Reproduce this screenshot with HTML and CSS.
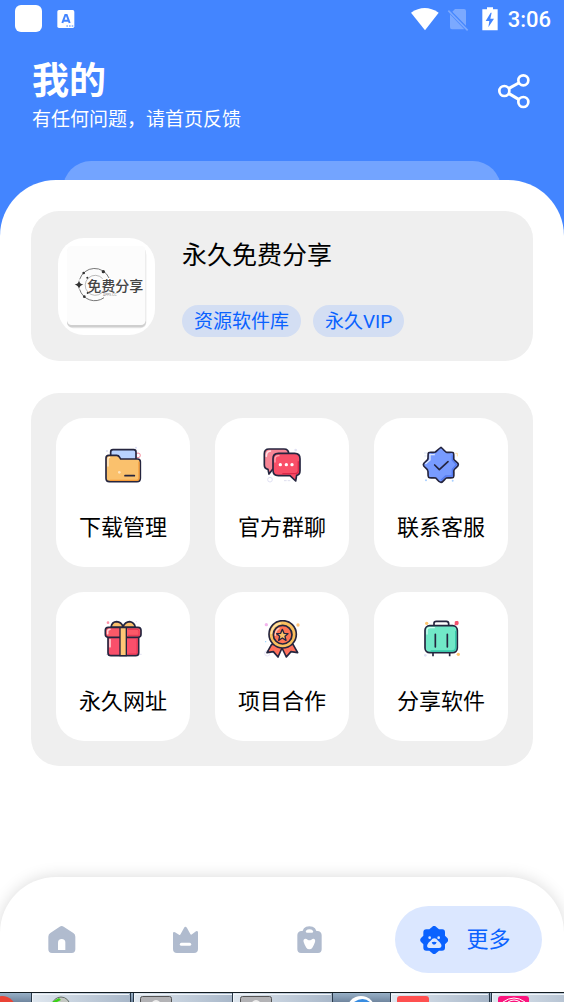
FILE: index.html
```
<!DOCTYPE html>
<html lang="zh-CN">
<head>
<meta charset="utf-8">
<meta name="viewport" content="width=device-width, initial-scale=1">
<title>我的</title>
<link rel="stylesheet" href="styles.css">
</head>

<body>
<header class="header">
  <div class="status">
    <span class="status-app"></span>
    <svg class="status-lang" width="18" height="20" viewBox="0 0 54 60">
      <rect x="1" y="3" width="51" height="54" rx="5" fill="#fff"/>
      <path d="M16 42 L25 18 H29 L38 42 M19 35 H35" fill="none" stroke="#4385ff" stroke-width="6"/>
      <path d="M28 51h5M36 51h5M44 51h5" stroke="#4385ff" stroke-width="3"/>
    </svg>
    <span class="status-space"></span>
    <svg width="28" height="24" viewBox="32 20 84 72">
      <path d="M32 37 Q73 9 115 37 L74 90Z" fill="#fff"/>
    </svg>
    <svg class="status-sim" width="22" height="24" viewBox="141 20 66 72">
      <path d="M165 26H192Q198 26 198 32V76L157 34ZM150 42L193 87H156Q150 87 150 81Z" fill="#7ba9ff"/>
      <path d="M145 31L203 90" stroke="#7ba9ff" stroke-width="5"/>
    </svg>
    <svg class="status-battery" width="16" height="24" viewBox="246 20 48 72">
      <path d="M261 21H279V27H293V90H247V27H261Z" fill="#fff"/>
      <path d="M272 37L257 62H268L265 81L282 55H271L275 37Z" fill="#4385ff"/>
    </svg>
    <span class="status-time">3:06</span>
  </div>
  <div class="heading">
    <div>
      <h1 class="title">我的</h1>
      <p class="subtitle">有任何问题，请首页反馈</p>
    </div>
    <button class="share" type="button" aria-label="分享">
      <svg width="34" height="36" viewBox="291 220 102 108" fill="none" stroke="#fff" stroke-width="8">
        <circle cx="313" cy="274" r="15"/>
        <circle cx="370" cy="242" r="15"/>
        <circle cx="370" cy="307" r="15"/>
        <path d="M327 266L356 250M327 282L356 299" stroke-width="9"/>
      </svg>
    </button>
  </div>
  <div class="ledge"></div>
</header>

<main class="sheet">
  <section class="profile">
    <svg class="profile-pic" viewBox="174 264 291 291">
      <rect x="201" y="296" width="238" height="239" rx="18" fill="#e8e8e8"/>
      <rect x="201" y="292" width="237" height="240" rx="16" fill="#cfcfcf"/>
      <rect x="201" y="288" width="236" height="237" rx="14" fill="#fcfcfc"/>
      <g fill="none" stroke="#777" stroke-width="3">
        <path d="M327 384A47 47 0 0 0 239 388M239 418A47 47 0 0 0 312 443"/>
        <path d="M308 386A30 30 0 1 0 306 428" stroke="#999" stroke-width="2"/>
      </g>
      <g fill="#333">
        <path d="M237 390Q238 402 250 404Q238 406 237 418Q236 406 224 404Q236 402 237 390Z"/>
        <circle cx="310" cy="365" r="5"/>
        <circle cx="251" cy="369" r="4"/>
        <circle cx="253" cy="440" r="4"/>
        <circle cx="262" cy="383" r="3"/>
        <circle cx="263" cy="429" r="3"/>
      </g>
      <text class="pic-name" x="262" y="423">免费分享</text>
      <text class="pic-sub" x="309" y="439">APPS.CC</text>
    </svg>
    <div class="profile-info">
      <h2 class="profile-name">永久免费分享</h2>
      <div class="tags">
        <span class="tag">资源软件库</span>
        <span class="tag">永久VIP</span>
      </div>
    </div>
  </section>

  <section class="tiles">
    <a class="tile" href="#">
      <svg class="tile-icon" viewBox="42 48 114 114">
        <circle cx="144" cy="76" r="7" fill="none" stroke="#f58a9b" stroke-width="3"/>
        <circle cx="51" cy="63" r="3" fill="#dcdff5"/>
        <circle cx="138" cy="53" r="3" fill="#dcdff5"/>
        <path d="M62 84V66Q62 59 69 59H131Q138 59 138 66V92H62Z" fill="#b9d3ff" stroke="#25253f" stroke-width="5"/>
        <path d="M48 84Q48 76 56 76H80Q86 76 89 82L92 87H143Q151 87 151 95V145Q151 155 141 155H58Q48 155 48 145Z" fill="#fac16d" stroke="#25253f" stroke-width="5"/>
        <path d="M147 95V144Q147 151 140 151H60" fill="none" stroke="#f59b39" stroke-width="4"/>
        <path d="M54 108V87Q54 82 59 82" fill="none" stroke="#fff0d8" stroke-width="4" stroke-linecap="round"/>
        <circle cx="88" cy="127" r="4" fill="#ffe4bd"/>
        <path d="M105 137H133" stroke="#25253f" stroke-width="5" stroke-linecap="round"/>
      </svg>
      <span class="tile-label">下载管理</span>
    </a>
    <a class="tile" href="#">
      <svg class="tile-icon" viewBox="48 48 114 114">
        <circle cx="69" cy="149" r="7" fill="none" stroke="#e1e1f3" stroke-width="3"/>
        <circle cx="146" cy="60" r="4" fill="#e1e1f3"/>
        <path d="M111 152H132" stroke="#dedeee" stroke-width="3" stroke-dasharray="8 3"/>
        <path d="M66 57H111Q125 57 125 71V108Q125 118 113 118H77L66 132L63 118Q52 116 52 105V71Q52 57 66 57Z" fill="#f78595" stroke="#25253f" stroke-width="5" stroke-linejoin="round"/>
        <path d="M58 79Q58 64 70 63" fill="none" stroke="#ffe0e4" stroke-width="5" stroke-linecap="round"/>
        <path d="M94 70H143Q159 70 159 86V122Q159 134 149 136L146 153L129 137H94Q78 137 78 121V86Q78 70 94 70Z" fill="#f94f68" stroke="#25253f" stroke-width="5" stroke-linejoin="round"/>
        <path d="M84 96V88Q84 77 96 77" fill="none" stroke="#ffacb5" stroke-width="4" stroke-linecap="round"/>
        <path d="M154 94V122Q154 130 145 131H106" fill="none" stroke="#dc2949" stroke-width="4"/>
        <g fill="#fff"><circle cx="100" cy="104" r="5"/><circle cx="118" cy="104" r="5"/><circle cx="135" cy="104" r="5"/></g>
      </svg>
      <span class="tile-label">官方群聊</span>
    </a>
    <a class="tile" href="#">
      <svg class="tile-icon" viewBox="51 48 114 114">
        <path d="M57 69H68M58 78H65" stroke="#dce7f7" stroke-width="3"/>
        <path d="M151 70H157V79" fill="none" stroke="#ffdfa4" stroke-width="3"/>
        <g fill="#a8cfff"><circle cx="63" cy="151" r="3"/><circle cx="143" cy="152" r="3"/></g>
        <path d="M108 52C116 58 121 67 125 67C130 68 143 65 145 68C148 72 145 86 147 89C149 93 160 97 160 104C160 110 149 115 147 120C145 125 149 138 145 142C141 146 129 142 124 144C119 146 115 157 108 157C100 157 97 147 92 144C87 142 74 146 71 142C67 138 71 126 68 121C66 115 55 111 55 104C55 97 66 93 68 88C71 84 67 72 71 68C75 65 86 69 91 66C96 62 100 57 108 52Z" fill="#789bff" stroke="#25253f" stroke-width="5" stroke-linejoin="round"/>
        <path d="M142 76V91L154 104L142 118V138H122L108 151" fill="none" stroke="#557bf0" stroke-width="4"/>
        <path d="M62 101L75 90V74H88" fill="none" stroke="#dce6ff" stroke-width="4" stroke-linecap="round"/>
        <path d="M89 105L103 119L129 95" fill="none" stroke="#25253f" stroke-width="5" stroke-linecap="round" stroke-linejoin="round"/>
      </svg>
      <span class="tile-label">联系客服</span>
    </a>
    <a class="tile" href="#">
      <svg class="tile-icon" viewBox="42 45 114 114">
        <circle cx="54" cy="53" r="4" fill="#ff91a6"/>
        <circle cx="139" cy="50" r="2" fill="#e8dff5"/>
        <path d="M48 148H155" stroke="#e2e1f2" stroke-width="3"/>
        <path d="M63 67Q66 50 80 50Q94 51 99 65Q105 51 119 50Q133 52 136 67Z" fill="#fcc16b" stroke="#25253f" stroke-width="5"/>
        <path d="M54 95H146V143Q146 152 137 152H63Q54 152 54 143Z" fill="#f94f6b" stroke="#25253f" stroke-width="5"/>
        <rect x="46" y="67" width="107" height="30" rx="9" fill="#fb5968" stroke="#25253f" stroke-width="5"/>
        <path d="M90 68H109V152H90Z" fill="#ffc775" stroke="#25253f" stroke-width="4"/>
        <path d="M53 86V78Q54 73 60 73M60 104V125" fill="none" stroke="#ffd0d3" stroke-width="5" stroke-linecap="round"/>
        <path d="M114 73H141Q147 73 147 80V91H114M115 147H136Q141 147 141 142V100" fill="none" stroke="#e83755" stroke-width="3"/>
      </svg>
      <span class="tile-label">永久网址</span>
    </a>
    <a class="tile" href="#">
      <svg class="tile-icon" viewBox="48 45 114 114">
        <circle cx="58" cy="59" r="5" fill="#f3b5ed"/>
        <circle cx="153" cy="60" r="5" fill="#ffc57c"/>
        <circle cx="56" cy="110" r="2" fill="#8fcfff"/>
        <circle cx="61" cy="145" r="8" fill="none" stroke="#e8e5f7" stroke-width="3"/>
        <path d="M74 118L60 143L79 140L93 156L105 129L118 156L132 140L152 143L138 118Z" fill="#ff715c" stroke="#25253f" stroke-width="5" stroke-linejoin="round"/>
        <circle cx="107" cy="88" r="41" fill="#fac05f" stroke="#25253f" stroke-width="5"/>
        <path d="M73 85Q76 60 99 55" fill="none" stroke="#ffe2a6" stroke-width="5" stroke-linecap="round"/>
        <circle cx="107" cy="89" r="28" fill="#ff7354" stroke="#25253f" stroke-width="5"/>
        <path d="M85 91Q85 76 96 70" fill="none" stroke="#ffcbb9" stroke-width="4" stroke-linecap="round"/>
        <path d="M106 73L111 85L123 86L114 94L117 106L106 99L95 106L98 94L89 86L101 85Z" fill="#ffc269" stroke="#25253f" stroke-width="4" stroke-linejoin="round"/>
      </svg>
      <span class="tile-label">项目合作</span>
    </a>
    <a class="tile" href="#">
      <svg class="tile-icon" viewBox="51 45 114 114">
        <g fill="#ffc66e"><circle cx="65" cy="55" r="5"/><circle cx="160" cy="148" r="5"/></g>
        <circle cx="61" cy="151" r="4" fill="#e1e1f4"/>
        <path d="M150 50L159 59M150 60L159 49M155 48V61M149 54H161" stroke="#f6536e" stroke-width="5"/>
        <path d="M87 63V55Q87 49 94 49H124Q131 49 131 56V63M84 143V154M134 143V154" fill="none" stroke="#25253f" stroke-width="5"/>
        <rect x="60" y="62" width="97" height="81" rx="14" fill="#71e8c7" stroke="#25253f" stroke-width="5"/>
        <path d="M152 77V126Q152 138 141 138H77" fill="none" stroke="#36c9ac" stroke-width="4"/>
        <path d="M66 87V77Q66 68 76 68H88" fill="none" stroke="#d5fff3" stroke-width="4" stroke-linecap="round"/>
        <path d="M91 88V126M127 88V126" stroke="#25253f" stroke-width="5" stroke-linecap="round"/>
      </svg>
      <span class="tile-label">分享软件</span>
    </a>
  </section>
</main>

<nav class="nav">
  <a class="nav-item" href="#" aria-label="首页">
    <svg class="nav-icon" viewBox="144 183 84 84">
      <path d="M179 185Q185 181 191 185L220 204Q226 208 226 215V253Q226 264 215 264H156Q145 264 145 253V215Q145 208 151 204Z" fill="#b0bbce"/>
      <path d="M174 255V233Q174 222 185 222Q196 222 196 233V255Z" fill="#fff"/>
    </svg>
  </a>
  <a class="nav-item" href="#" aria-label="会员">
    <svg class="nav-icon" viewBox="516 183 84 84">
      <path d="M519 204Q520 199 525 202L537 209Q540 211 542 207L552 189Q556 182 561 189L571 207Q573 211 576 208L588 199Q593 196 594 202V252Q594 264 582 264H531Q519 264 519 252Z" fill="#b0bbce"/>
      <path d="M544 238H569" stroke="#fff" stroke-width="9" stroke-linecap="round"/>
    </svg>
  </a>
  <a class="nav-item" href="#" aria-label="收藏">
    <svg class="nav-icon" viewBox="42 183 84 84">
      <path d="M65 208Q65 188 82 188Q100 188 100 208" fill="none" stroke="#b0bbce" stroke-width="9"/>
      <path d="M57 198H68L74 203H91L97 198H108Q119 200 119 211V253Q119 264 108 264H57Q46 264 46 253V211Q46 200 57 198Z" fill="#b0bbce"/>
      <path d="M65 224Q70 219 77 224Q82 228 88 224Q95 219 99 224Q102 229 91 248Q88 253 82 253Q76 253 73 248Q62 229 65 224Z" fill="#fff"/>
    </svg>
  </a>
  <div class="nav-item">
    <a class="nav-more" href="#">
      <svg class="nav-icon" viewBox="411 181 84 84">
        <path d="M448 183Q453 178 459 183L468 191H478Q486 191 486 200V210L493 217Q498 223 493 229L486 236V246Q486 255 477 255H468L459 263Q453 268 448 263L439 255H430Q421 255 421 246V236L414 229Q409 223 414 217L421 210V200Q421 191 430 191H439Z" fill="#0a62ff"/>
        <circle cx="440" cy="216" r="4" fill="#dbe7ff"/>
        <circle cx="467" cy="216" r="4" fill="#dbe7ff"/>
        <path d="M439 247Q430 246 433 237Q436 229 443 225Q448 218 454 218Q460 218 465 225Q472 229 475 237Q477 246 468 247Z" fill="#dbe7ff"/>
        <path d="M446 230Q454 227 461 230Q459 237 453 237Q448 237 446 230Z" fill="#0a62ff"/>
      </svg>
      <span>更多</span>
    </a>
  </div>
</nav>

<!-- top edge of the desktop taskbar -->
<svg class="taskbar" viewBox="0 0 564 10" preserveAspectRatio="none">
  <defs>
    <linearGradient id="bar" x2="0" y2="1"><stop offset="0" stop-color="#9db5cb"/><stop offset="1" stop-color="#70869f"/></linearGradient>
    <linearGradient id="btn" x2="1" y2="0"><stop offset="0" stop-color="#e0e8f0"/><stop offset="1" stop-color="#a8b7c9"/></linearGradient>
  </defs>
  <rect width="564" height="10" fill="url(#bar)"/>
  <g fill="url(#btn)" stroke="#273848">
    <path d="M31.500 0H130.500V12H31.500Z"/>
    <path d="M133.500 0H232.500V12H133.500Z"/>
    <path d="M232.500 0H332.500V12H232.500Z"/>
    <path d="M390.500 0H489.500V12H390.500Z"/>
    <path d="M491.500 0H590.500V12H491.500Z"/>
  </g>
  <path d="M32.500 10V2.500H129M134.500 10V2.500H232M233.500 10V2.500H331M391.500 10V2.500H488M492.500 10V2.500H564" fill="none" stroke="#f0f5f9"/>
  <circle cx="2" cy="18" r="14" fill="#ea4335"/>
  <circle cx="61" cy="14" r="9" fill="#c4c8c3" stroke="#65706a"/>
  <path d="M52 10L59 6L61 8L57 10Z" fill="#38d414"/>
  <g fill="#b3b3b6" stroke="#555" stroke-width="1">
    <rect x="140.500" y="4.500" width="31" height="10" rx="2"/>
    <rect x="240.500" y="4.500" width="31" height="10" rx="2"/>
  </g>
  <path d="M152 10Q156 6 160 10M252 10Q256 6 260 10" fill="#eee"/>
  <circle cx="361" cy="18" r="14" fill="#fff"/>
  <path d="M354 10Q363 4 370 10Z" fill="#388ce0"/>
  <rect x="397" y="4" width="32" height="10" rx="3" fill="#ff5050"/>
  <rect x="498" y="4" width="31" height="10" rx="3" fill="#fb147d"/>
  <path d="M503 10Q514 2 525 10M508 10Q514 6 520 10" fill="none" stroke="#fff"/>
  <path d="M0 .5H564" stroke="#111b20"/>
</svg>
</body>
</html>
```
FILE: styles.css
```
* {
  box-sizing: border-box;
}

body {
  display: flex;
  flex-direction: column;
  min-height: 100vh;
  margin: 0;
  background: #fff;
  color: #000;
  font-family: Roboto, "Noto Sans CJK SC", sans-serif;
}

h1, h2, p {
  margin: 0;
}

a {
  color: inherit;
  text-decoration: none;
}

svg {
  display: block;
  flex: none;
}

/* header */
.header {
  height: 236px;
  margin-bottom: -56px;
  background: #4385ff;
  color: #fff;
}

.status {
  display: flex;
  align-items: center;
  height: 37px;
  padding: 0 13px 0 15px;
}

.status-app {
  width: 27px;
  height: 27px;
  border-radius: 6px;
  background: #fff;
}

.status-lang {
  margin-left: 15px;
}

.status-space {
  flex: 1;
}

.status-sim {
  margin-left: 8px;
}

.status-battery {
  margin: 0 10px 0 13px;
}

.status-time {
  font-size: 22px;
  font-weight: 500;
  line-height: 32px;
  padding-top: 2px;
}

.heading {
  display: flex;
  align-items: flex-start;
  justify-content: space-between;
  padding: 23px 33px 0 32px;
}

.title {
  font-size: 37px;
  font-weight: 700;
  line-height: 44px;
}

.subtitle {
  font-size: 19px;
  line-height: 32px;
}

.share {
  margin-top: 13px;
  padding: 0;
  border: 0;
  background: none;
  cursor: pointer;
}

.ledge {
  height: 56px;
  margin: 25px 63px 0;
  border-radius: 28px;
  background: #73a4ff;
}

/* content */
.sheet {
  position: relative;
  flex: 1;
  padding: 31px;
  border-radius: 56px 56px 0 0;
  background: #fff;
}

.profile {
  display: flex;
  align-items: flex-start;
  gap: 27px;
  padding: 27px 27px 24px;
  border-radius: 28px;
  background: #efefef;
}

.profile-pic {
  width: 97px;
  height: 97px;
  border-radius: 26px;
  background: #fff;
}

.pic-name {
  fill: #444;
  font-size: 42px;
  font-weight: 500;
}

.pic-sub {
  fill: #888;
  font-size: 10px;
}

.profile-name {
  font-size: 25px;
  font-weight: 400;
  line-height: 36px;
}

.tags {
  display: flex;
  flex-wrap: wrap;
  gap: 12px;
  margin-top: 31px;
}

.tag {
  padding: 2px 12px 0;
  border-radius: 16px;
  background: #d3def3;
  color: #0a62ff;
  font-size: 19px;
  line-height: 30px;
}

.tiles {
  display: grid;
  grid-template-columns: repeat(3, 1fr);
  gap: 25px;
  margin-top: 32px;
  padding: 25px;
  border-radius: 28px;
  background: #efefef;
}

.tile {
  display: flex;
  flex-direction: column;
  align-items: center;
  padding: 28px 0 23px;
  border-radius: 28px;
  background: #fff;
}

.tile-icon {
  width: 38px;
  height: 38px;
}

.tile-label {
  margin-top: 28px;
  font-size: 22px;
  line-height: 32px;
}

/* bottom navigation */
.nav {
  position: relative;
  display: grid;
  grid-template-columns: 22fr 22fr 22fr 34fr;
  padding: 29px 0 19px;
  border-radius: 56px 56px 0 0;
  background: #fff;
  box-shadow: 0 0 16px rgba(0, 0, 0, 0.15);
}

.nav-item {
  display: flex;
  align-items: center;
  justify-content: center;
}

.nav-icon {
  width: 28px;
  height: 28px;
}

.nav-more {
  display: flex;
  align-items: center;
  gap: 19px;
  height: 67px;
  padding: 0 31px 0 25px;
  border-radius: 34px;
  background: #dbe7ff;
  color: #0a62ff;
  font-size: 22px;
  line-height: 32px;
}

.taskbar {
  position: relative;
  width: 100%;
  height: 10px;
}
```
